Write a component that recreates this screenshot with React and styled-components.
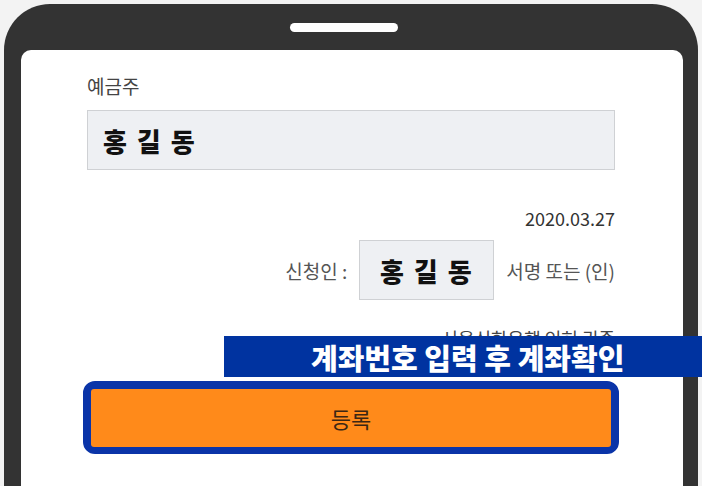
import styled, { createGlobalStyle } from 'styled-components'

const GlobalStyle = createGlobalStyle`
  html, body {
    margin: 0;
    padding: 0;
    background: #f3f3f3;
    overflow: hidden;
  }
  body {
    font-family: "Noto Sans CJK KR", "Noto Sans", sans-serif;
  }
`

export default function App() {
  return (
    <Page>
      <GlobalStyle />
      <Phone>
        <TopBar>
          <Speaker />
        </TopBar>
        <Screen>
          <Label>예금주</Label>
          <NameField>홍 길 동</NameField>
          <DateLine>2020.03.27</DateLine>
          <SignRow>
            <RowText>신청인 :</RowText>
            <SignBox>홍 길 동</SignBox>
            <RowText>서명 또는 (인)</RowText>
          </SignRow>
          <Recipient>서울신한은행 인허 귀중</Recipient>
          <Highlight>
            <SubmitButton>등록</SubmitButton>
          </Highlight>
        </Screen>
      </Phone>
      <Caption>계좌번호 입력 후 계좌확인</Caption>
    </Page>
  )
}

const Page = styled.div`
  position: relative;
  width: 702px;
  height: 486px;
  padding: 4px 4px 0 4px;
  box-sizing: border-box;
  overflow: hidden;
`

const Phone = styled.div`
  height: 482px;
  background: #333333;
  border-radius: 46px 46px 0 0;
  padding: 0 15px 0 17px;
  display: flex;
  flex-direction: column;
`

const TopBar = styled.div`
  height: 46px;
  display: flex;
  justify-content: center;
  padding-top: 19px;
  box-sizing: border-box;
`

const Speaker = styled.div`
  width: 108px;
  height: 9px;
  border-radius: 5px;
  background: #ffffff;
  margin-right: 16px;
`

const Screen = styled.div`
  flex: 1;
  background: #ffffff;
  border-radius: 10px 10px 0 0;
  padding: 23px 68px 0 66px;
  display: flex;
  flex-direction: column;
`

const Label = styled.div`
  font-size: 19px;
  line-height: 26px;
  color: #444444;
  margin-bottom: 11px;
`

const NameField = styled.div`
  height: 60px;
  box-sizing: border-box;
  border: 1px solid #cfd1d4;
  background: #eef0f3;
  display: flex;
  align-items: center;
  padding-left: 15px;
  font-size: 26px;
  font-weight: 900;
  letter-spacing: 2px;
  color: #111111;
`

const DateLine = styled.div`
  margin-top: 35px;
  text-align: right;
  font-size: 18px;
  line-height: 26px;
  color: #333333;
`

const SignRow = styled.div`
  margin-top: 9px;
  display: flex;
  justify-content: flex-end;
  align-items: center;
  gap: 12px;
`

const RowText = styled.span`
  font-size: 19px;
  color: #555555;
`

const SignBox = styled.div`
  width: 135px;
  height: 60px;
  box-sizing: border-box;
  border: 1px solid #cfd1d4;
  background: #eef0f3;
  display: flex;
  align-items: center;
  justify-content: center;
  font-size: 26px;
  font-weight: 900;
  letter-spacing: 2px;
  color: #111111;
`

const Recipient = styled.div`
  margin-top: 26px;
  text-align: right;
  font-size: 18px;
  line-height: 24px;
  color: #444444;
`

const Highlight = styled.div`
  margin: 31px -4px 0 -4px;
  border: 8px solid #0a34a8;
  border-bottom-width: 7px;
  border-radius: 12px;
  background: #0a34a8;
`

const SubmitButton = styled.div`
  height: 58px;
  background: #ff8a1a;
  border-radius: 3px;
  display: flex;
  align-items: center;
  justify-content: center;
  font-size: 22px;
  color: #3a2614;
`

const Caption = styled.div`
  position: absolute;
  left: 224px;
  top: 336px;
  right: 0;
  height: 41px;
  background: #0033a0;
  color: #ffffff;
  font-size: 29px;
  font-weight: 900;
  display: flex;
  align-items: center;
  padding-left: 87px;
  box-sizing: border-box;
`
